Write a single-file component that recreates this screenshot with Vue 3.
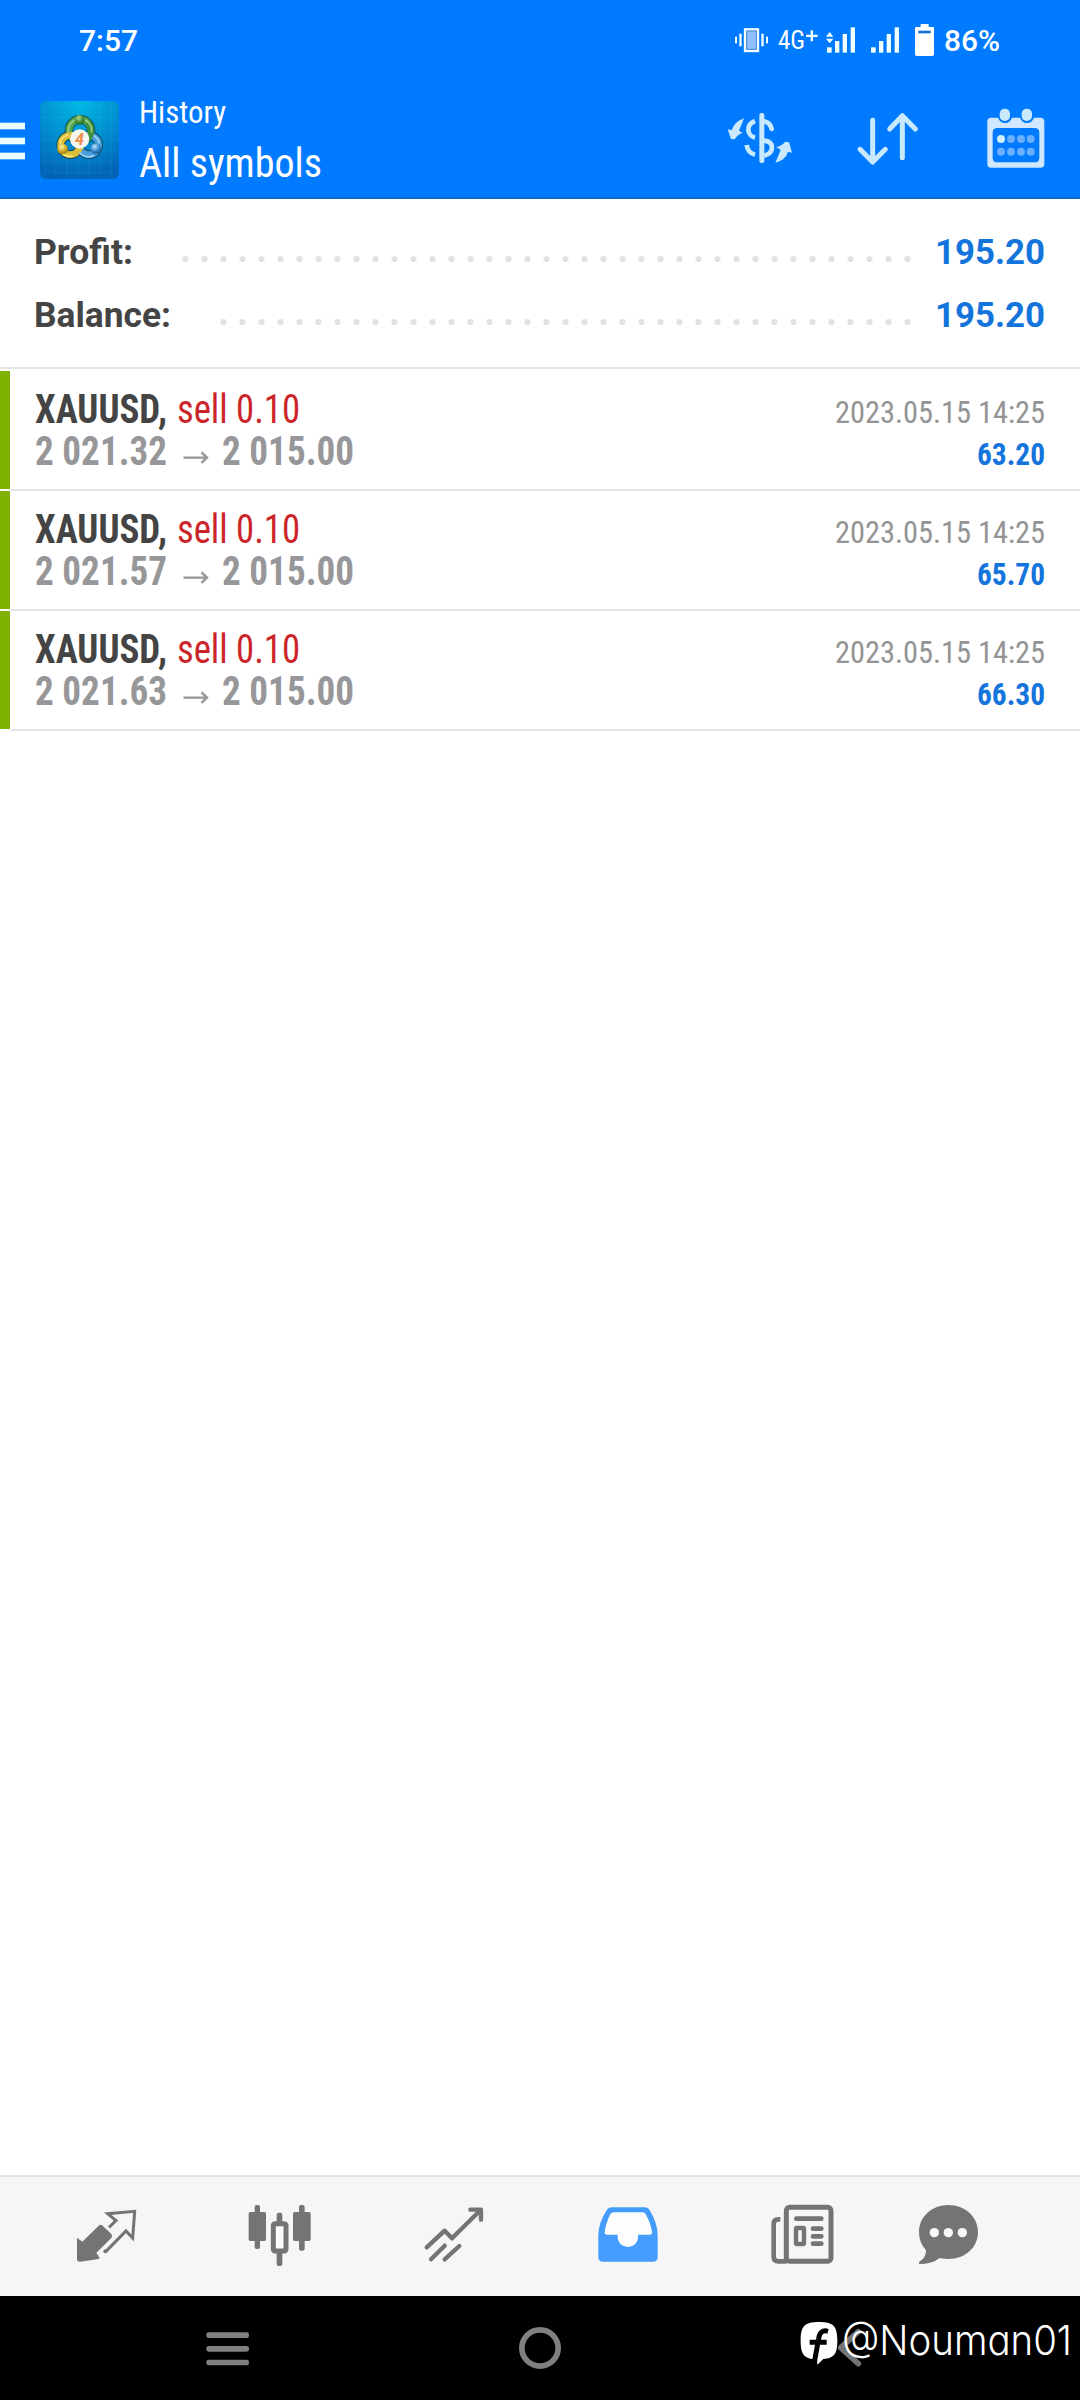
<script setup>
import { h } from 'vue'

// Single line of text set to an exact advance width on a fixed baseline.
const FitText = (p) =>
  h('svg', { width: p.w, height: p.h, style: { display: 'block', overflow: 'visible', flex: 'none' } }, [
    h('text', {
      x: 0, y: p.y, textLength: p.w, lengthAdjust: 'spacingAndGlyphs', fill: p.color || '#fff',
      style: {
        fontFamily: 'Roboto, "Liberation Sans", sans-serif', fontSize: p.size + 'px',
        fontWeight: p.weight || 400, fontStretch: p.wide ? '100%' : '75%', whiteSpace: 'pre'
      }
    }, p.text)
  ])
FitText.props = ['text', 'w', 'h', 'y', 'size', 'weight', 'color', 'wide']

const summary = [
  { label: 'Profit:', w: 99, dots: 39, value: '195.20' },
  { label: 'Balance:', w: 137, dots: 37, value: '195.20' }
]
const trades = [
  { open: '2 021.32', close: '2 015.00', time: '2023.05.15 14:25', profit: '63.20' },
  { open: '2 021.57', close: '2 015.00', time: '2023.05.15 14:25', profit: '65.70' },
  { open: '2 021.63', close: '2 015.00', time: '2023.05.15 14:25', profit: '66.30' }
]
</script>

<template>
  <div class="screen">
    <header>
      <div class="status">
        <FitText class="time" text="7:57" :w="59" :h="40" :y="31" :size="30" weight="500" wide="1" />
        <div class="indicators">
          <svg width="35" height="40" viewBox="45 60 105 120" fill="#f2ffff">
            <rect x="48" y="110" width="6" height="20" /><rect x="61" y="101" width="7" height="38" />
            <rect x="127" y="101" width="7" height="38" /><rect x="141" y="110" width="6" height="20" />
            <rect x="78" y="88" width="39" height="65" fill="#8fc0ff" stroke="#f2ffff" stroke-width="7" />
            <rect x="83" y="93" width="29" height="55" fill="none" stroke="#4a86c8" stroke-width="3" />
          </svg>
          <FitText class="net" text="4G" :w="27" :h="40" :y="29" :size="26" weight="400" />
          <svg class="plus" width="12" height="40" viewBox="260 60 36 120" fill="#f2ffff">
            <path d="M274 91h7v13h14v7h-14v13h-7v-13h-14v-7h14z" />
          </svg>
          <svg class="sig1" width="30" height="40" viewBox="318 60 90 120" fill="#f2ffff">
            <path d="M318 110l11-14 11 14zM318 116l11 14 11-14z" />
            <rect x="321" y="142" width="14" height="16" /><rect x="345" y="123" width="13" height="35" />
            <rect x="368" y="102" width="13" height="56" /><rect x="392" y="82" width="13" height="76" />
          </svg>
          <svg class="sig2" width="30" height="40" viewBox="450 60 90 120" fill="#f2ffff">
            <rect x="453" y="142" width="14" height="16" /><rect x="477" y="123" width="13" height="35" />
            <rect x="500" y="102" width="13" height="56" /><rect x="524" y="82" width="13" height="76" />
          </svg>
          <svg class="batt" width="21" height="40" viewBox="582 60 63 120">
            <path fill="#fff" d="M602 72h24v9h12q4 0 4 4v78q0 5-5 5h-47q-5 0-5-5V85q0-4 4-4h13z" />
            <rect x="595" y="92" width="37" height="8" fill="#176fd2" />
          </svg>
          <FitText class="pct" text="86%" :w="56" :h="40" :y="31" :size="30" weight="500" wide="1" />
        </div>
      </div>

      <div class="appbar">
        <svg width="25" height="78" viewBox="0 303 75 234" fill="#ebffff">
          <rect y="368" width="75" height="20" /><rect y="413" width="75" height="20" /><rect y="458" width="75" height="20" />
        </svg>
        <svg class="logo" width="79" height="78" viewBox="120 303 237 234">
          <defs>
            <radialGradient id="tile" cx=".5" cy="0" r="1">
              <stop offset="0" stop-color="#00b9e6" /><stop offset=".5" stop-color="#008fd0" /><stop offset="1" stop-color="#0262b6" />
            </radialGradient>
            <radialGradient id="gg" cx=".4" cy=".3" r=".8"><stop offset="0" stop-color="#b5dd8a" /><stop offset=".55" stop-color="#3f8a38" /><stop offset="1" stop-color="#1d5f2c" /></radialGradient>
            <radialGradient id="gy" cx=".4" cy=".3" r=".8"><stop offset="0" stop-color="#fff3a0" /><stop offset=".55" stop-color="#cda922" /><stop offset="1" stop-color="#8d6d10" /></radialGradient>
            <radialGradient id="gb" cx=".4" cy=".3" r=".8"><stop offset="0" stop-color="#b9e4fb" /><stop offset=".55" stop-color="#3387c8" /><stop offset="1" stop-color="#0d4f8e" /></radialGradient>
          </defs>
          <rect x="120" y="303" width="237" height="234" rx="18" fill="url(#tile)" />
          <path stroke="#5fd0f0" stroke-opacity=".16" stroke-width="2" d="M135 303v234M168 303v234M201 303v234M234 303v234M267 303v234M300 303v234M333 303v234M120 320h237M120 353h237M120 386h237M120 419h237M120 452h237M120 485h237M120 518h237" />
          <g fill="none" stroke-linecap="round">
            <g stroke="#12414f" stroke-opacity=".8" stroke-width="26">
              <circle cx="240" cy="391" r="33" /><circle cx="211" cy="435" r="29" /><circle cx="267" cy="435" r="29" />
            </g>
            <circle cx="240" cy="391" r="33" stroke="#56a548" stroke-width="20" />
            <circle cx="267" cy="435" r="29" stroke="#4a9edb" stroke-width="20" />
            <circle cx="211" cy="435" r="29" stroke="#dcbd36" stroke-width="20" />
            <path d="M240 391m20 27a33 33 0 0 0 8-45" stroke="#3f8f3c" stroke-width="18" />
            <path d="M205 396a36 36 0 0 1 21-37M275 396a36 36 0 0 0-21-37" stroke="#9bd08a" stroke-width="5" />
            <path d="M180 429a32 32 0 0 1 24-24M189 462a34 34 0 0 0 28 6" stroke="#f7e67c" stroke-width="5" />
            <path d="M240 459a33 33 0 0 0 40 8M298 428a33 33 0 0 0-15-20" stroke="#98d2f5" stroke-width="5" />
          </g>
          <circle cx="239" cy="360" r="15" fill="url(#gg)" /><circle cx="188" cy="447" r="16" fill="url(#gy)" /><circle cx="287" cy="446" r="16" fill="url(#gb)" />
          <circle cx="239" cy="417" r="29" fill="#f6f7ef" />
          <text x="238" y="435" text-anchor="middle" class="four">4</text>
        </svg>
        <div class="titles">
          <FitText text="History" :w="87" :h="44" :y="43" :size="31.5" />
          <FitText text="All symbols" :w="183" :h="54" :y="53" :size="40" />
        </div>
        <svg class="dollar" width="68" height="78" viewBox="18 303 204 234" fill="#c9e9ff">
          <path d="M72 355L57 392L68 399Q55 401 44 418L33 417L23 388L35 391Q43 365 72 355Z" />
          <path d="M166 488L182 450L169 441Q184 438 196 425L207 427L216 458L204 455Q197 480 166 488Z" />
          <rect x="118" y="339" width="15" height="150" rx="6" />
          <g fill="none" stroke="#c9e9ff" stroke-width="14">
            <path d="M105 363Q84 371 85 390Q86 407 105 413" /><path d="M80 435Q83 458 105 464" />
            <path d="M132 364Q150 366 155 387" stroke-linecap="round" /><path d="M132 422Q155 424 156 442Q156 462 132 467" />
          </g>
        </svg>
        <svg class="sort" width="64" height="78" viewBox="408 303 192 234" fill="none" stroke="#c9e9ff" stroke-width="15" stroke-linecap="round" stroke-linejoin="round">
          <path d="M458 361V485M420 448L458 486L496 448M547 473V349M509 387L547 347L586 387" />
        </svg>
        <svg class="cal" width="60" height="78" viewBox="798 303 180 234">
          <path fill="#d0e8ff" fill-rule="evenodd" d="M814 353H834Q840 369 855 369Q870 369 876 353H900Q906 369 921 369Q936 369 942 353H961Q973 353 973 365V491Q973 503 961 503H814Q802 503 802 491V365Q802 353 814 353ZM832 384Q818 384 818 398V473Q818 487 832 487H944Q958 487 958 473V398Q958 384 944 384Z" />
          <rect x="839" y="326" width="31" height="37" rx="15" fill="#c9e9ff" /><rect x="905" y="326" width="31" height="37" rx="15" fill="#c9e9ff" />
          <g fill="#6bb0ff">
            <circle cx="843" cy="417" r="12" fill="#d3efff" /><circle cx="873" cy="417" r="12" /><circle cx="903" cy="417" r="12" /><circle cx="932" cy="417" r="12" />
            <circle cx="843" cy="455" r="12" /><circle cx="873" cy="455" r="12" /><circle cx="903" cy="455" r="12" /><circle cx="932" cy="455" r="12" />
          </g>
        </svg>
      </div>
    </header>

    <section class="summary">
      <div v-for="s in summary" :key="s.label" class="sum-row">
        <FitText :text="s.label" :w="s.w" :h="63" :y="45" :size="35" weight="700" color="#444" wide="1" />
        <svg class="dots" :width="s.dots * 19" height="63" fill="#e2e2e2">
          <circle v-for="n in s.dots" :key="n" :cx="n * 19 - 9.5" cy="40" r="3.1" />
        </svg>
        <FitText class="sum-val" :text="s.value" :w="110" :h="63" :y="45" :size="35" weight="700" color="#1374dc" wide="1" />
      </div>
    </section>

    <main>
      <article v-for="t in trades" :key="t.open" class="trade">
        <div class="mark"></div>
        <div class="body">
          <div class="line">
            <FitText text="XAUUSD," :w="132" :h="42" :y="34.7" :size="40" weight="700" color="#444" />
            <FitText class="side" text="sell 0.10" :w="123" :h="42" :y="34.7" :size="40" color="#cb2529" />
            <FitText class="right" :text="t.time" :w="210" :h="42" :y="34.7" :size="32" color="#949494" />
          </div>
          <div class="line">
            <FitText :text="t.open" :w="132" :h="42" :y="34.7" :size="40" weight="700" color="#979799" />
            <svg class="arrow" width="26" height="42" fill="none" stroke="#979799" stroke-width="2.4"><path d="M0.5 27.6H24M18.5 22.3L24 27.6L18.5 32.9" /></svg>
            <FitText :text="t.close" :w="132" :h="42" :y="34.7" :size="40" weight="700" color="#979799" />
            <FitText class="right" :text="t.profit" :w="68" :h="42" :y="35" :size="32" weight="700" color="#1374dc" />
          </div>
        </div>
      </article>
    </main>

    <nav class="tabs">
      <svg width="63" height="70" viewBox="225 120 189 210" fill="#747474">
        <path d="M231 233L247 245L296 197Q302 192 308 197L334 222Q339 228 334 234L289 278L299 294Q298 297 292 298L240 305Q231 305 231 297Z" />
        <path d="M327 202L348 182L323 161L404 154L398 234L378 213L318 274" fill="none" stroke="#747474" stroke-width="9" />
        <circle cx="316" cy="274" r="6" />
      </svg>
      <svg class="t2" width="66" height="70" viewBox="741 120 198 210" fill="#747474">
        <rect x="746" y="156" width="52" height="87" rx="5" /><rect x="764" y="135" width="16" height="132" rx="6" />
        <rect x="879" y="156" width="53" height="87" rx="5" /><rect x="897" y="135" width="17" height="137" rx="6" />
        <rect x="830" y="158" width="17" height="35" rx="6" /><rect x="830" y="270" width="17" height="48" rx="6" />
        <rect x="820" y="191" width="38" height="82" rx="5" fill="#fbfbfb" stroke="#747474" stroke-width="15" />
      </svg>
      <svg class="t3" width="62" height="70" viewBox="189 120 186 210" fill="none" stroke="#747474" stroke-width="13" stroke-linecap="round" stroke-linejoin="round">
        <path d="M200 262L254 212L276 235L358 154M331 149H363V179M213 298L254 257M254 298L298 258" />
      </svg>
      <svg class="t4" width="62" height="70" viewBox="711 120 186 210">
        <path fill="#449dfd" d="M756 142H853Q864 142 870 152Q893 190 893 225V292Q893 305 880 305H728Q715 305 715 292V225Q715 190 739 152Q745 142 756 142Z" />
        <path fill="#fdfdfd" d="M761 157Q754 157 750 164Q737 192 734 216Q733 224 741 224H773V233A30.500 28 0 0 0 834 233V224H869Q877 224 876 216Q873 192 858 164Q854 157 847 157Z" />
      </svg>
      <svg class="t5" width="65" height="70" viewBox="150 120 195 210" fill="none" stroke="#747474" stroke-width="15">
        <rect x="199" y="142" width="134" height="162" rx="10" />
        <path d="M181 178H175Q161 178 161 192V290Q161 304 175 304H200" stroke-width="14" />
        <path d="M229 176H304M279 206H304M279 229H304M279 251H304" stroke-width="14" stroke-linecap="round" />
        <rect x="228" y="204" width="24" height="48" rx="3" stroke-width="13" />
      </svg>
      <svg class="t6" width="61" height="70" viewBox="594 120 183 210" fill="#747474">
        <path d="M685 135C735 135 774 170 774 216C774 263 735 297 685 297Q671 297 659 294Q637 312 598 312Q594 307 602 302Q619 291 618 271Q597 249 597 216C597 170 636 135 685 135Z" />
        <g fill="#f8f8f8"><circle cx="643" cy="218" r="14" /><circle cx="685" cy="218" r="14" /><circle cx="727" cy="218" r="14" /></g>
      </svg>
    </nav>

    <footer class="sys">
      <svg width="45" height="50" viewBox="615 480 135 150" fill="#808080">
        <rect x="619" y="517" width="128" height="17" rx="7" /><rect x="619" y="558" width="128" height="17" rx="7" /><rect x="619" y="599" width="128" height="17" rx="7" />
      </svg>
      <svg class="home" width="42" height="50" viewBox="477 480 126 150"><circle cx="540" cy="564" r="54.500" fill="none" stroke="#808080" stroke-width="17" /></svg>
      <svg class="back" width="27" height="50" viewBox="354 480 81 150"><path d="M421 515L368 563L421 611" fill="none" stroke="#737373" stroke-width="17" stroke-linecap="round" stroke-linejoin="round" /></svg>
      <div class="watermark">
        <svg width="38" height="50" viewBox="240 480 114 150">
          <path fill="#fff" d="M297 486C340 486 352 498 352 542C352 582 342 594 310 597L292 614L291 598C253 597 242 584 242 542C242 498 254 486 297 486Z" />
          <path d="M324 514Q300 507 296 535L284 602M269 547H320" fill="none" stroke="#000" stroke-width="15" />
        </svg>
        <svg class="handle" width="230" height="50"><text x="0" y="35" textLength="230" lengthAdjust="spacingAndGlyphs">@Nouman01</text></svg>
      </div>
    </footer>
  </div>
</template>

<style>
body { background: #fff; }
</style>

<style scoped>
.screen { width: 1080px; height: 2400px; display: flex; flex-direction: column; background: #fff; overflow: hidden; }
svg { display: block; flex: none; }
header { height: 197px; background: #007aff; border-bottom: 2px solid #0d6cd0; }
.status { height: 60px; padding: 20px 80px 0 79px; display: flex; justify-content: space-between; }
.indicators { display: flex; }
.net { margin-left: 9px; }
.plus { margin-left: 1px; }
.sig1 { margin-left: 8px; }
.sig2 { margin-left: 14px; }
.batt { margin-left: 14px; }
.pct { margin-left: 9px; }
.appbar { display: flex; padding: 21px 34px 0 0; }
.logo { margin-left: 15px; }
.titles { margin: -21px 0 0 20px; flex: 1; }
.sort { margin-left: 62px; }
.cal { margin-left: 66px; }
.four { font: italic 700 48px Roboto, sans-serif; fill: #ee8a4a; }
.summary { height: 148px; padding: 20px 35px 0 34px; border-bottom: 2px solid #e6e6e6; }
.sum-row { display: flex; }
.dots { margin-left: auto; }
.sum-val { margin-left: 18.5px; }
main { padding-top: 2px; flex: 1; }
.trade { height: 118px; display: flex; margin-bottom: 2px; }
.mark { width: 10px; background: #7fb100; }
.body { flex: 1; margin-left: 1px; padding: 17px 35px 0 24px; border-bottom: 2px solid #e4e4e4; height: 101px; }
.line { display: flex; }
.side { margin-left: 10px; }
.arrow { margin: 0 13px 0 16px; }
.right { margin-left: auto; }
.tabs { height: 96px; padding: 23px 0 0 75px; border-top: 2px solid #e2e2e2; background: #f6f6f6; display: flex; }
.t2 { margin-left: 109px; }
.t3 { margin-left: 110px; }
.t4 { margin-left: 112px; }
.t5 { margin-left: 111px; }
.t6 { margin-left: 83px; }
.sys { position: relative; height: 80px; padding: 24px 0 0 205px; background: #000; display: flex; }
.home { margin-left: 269px; }
.back { margin-left: 275px; }
.watermark { position: absolute; left: 800px; top: 24px; display: flex; gap: 4px; }
.handle { overflow: visible; font: 300 41px Inter, Lato, sans-serif; font-feature-settings: "cv11"; fill: #fff; }
</style>
